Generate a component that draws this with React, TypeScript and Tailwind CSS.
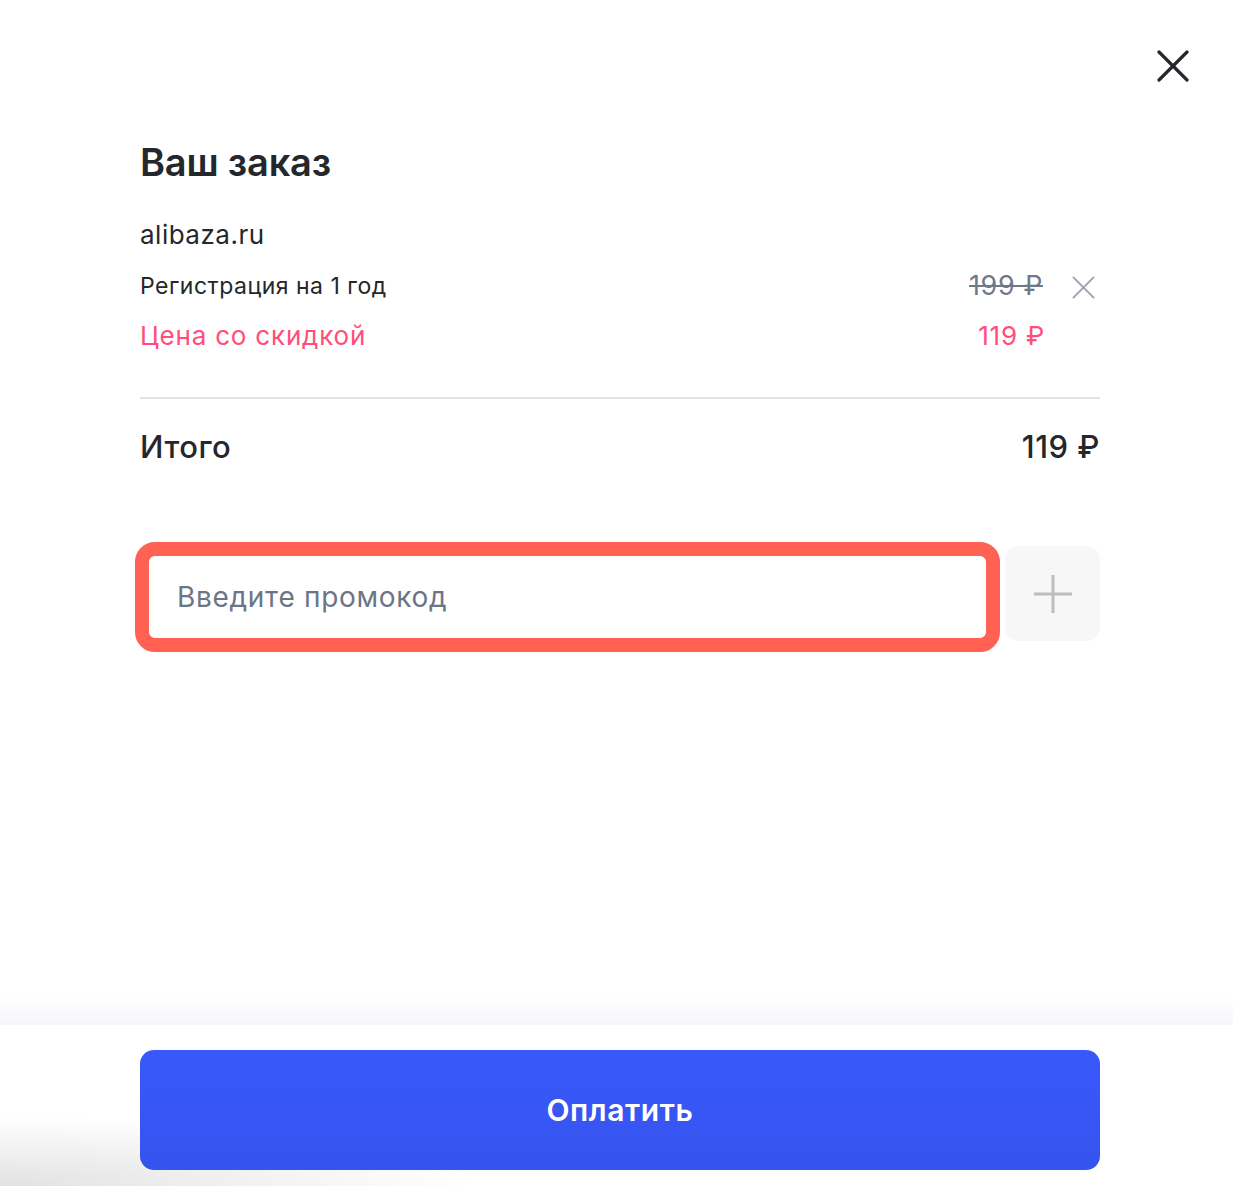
const font = { fontFamily: "Inter, 'Noto Sans', sans-serif" };

function Cross({ className, stroke }: { className: string; stroke: number }) {
    return (
        <svg viewBox="0 0 32 32" className={className} fill="none" stroke="currentColor" strokeWidth={stroke} strokeLinecap="round">
            <path d="M2 2 30 30" />
            <path d="M30 2 2 30" />
        </svg>
    );
}

export default function App() {
    return (
        <div className="relative flex h-[1186px] w-full flex-col overflow-hidden bg-white text-[#24272c]" style={font}>
            {/* close button */}
            <button className="absolute left-[1155px] top-[48px] flex h-[36px] w-[36px] items-center justify-center text-[#24272c]">
                <Cross className="h-[32px] w-[32px]" stroke={3.2} />
            </button>

            <div className="flex-1 px-[140px] pt-[138px]">
                <div className="w-[960px]">
                    <h1 className="text-[38px] font-semibold leading-[48px] tracking-[-0.2px]">Ваш заказ</h1>

                    <div className="mt-[31px] text-[26px] leading-[36px] tracking-[0.5px]">alibaza.ru</div>

                    {/* order line */}
                    <div className="mt-[18px] flex items-center justify-between">
                        <span className="text-[23px] leading-[30px] tracking-[0.5px]">Регистрация на 1 год</span>
                        <div className="mr-[5px] flex items-center gap-[29px]">
                            <span className="text-[27px] leading-[30px] tracking-[0.6px] text-[#6e7889] line-through decoration-2">199 ₽</span>
                            <Cross className="mt-[3px] h-[23px] w-[23px] text-[#98a2b3]" stroke={2.6} />
                        </div>
                    </div>
                    <div className="mt-[18px] flex items-center justify-between pr-[55px] text-[26px] leading-[34px] tracking-[0.8px] text-[#ff4e7b]">
                        <span>Цена со скидкой</span>
                        <span>119 ₽</span>
                    </div>

                    <div className="mt-[44px] h-[2px] bg-[#e1e4ec]" />

                    <div className="mt-[28px] flex items-center justify-between text-[31px] font-medium leading-[40px] tracking-[0.5px]">
                        <span>Итого</span>
                        <span>119 ₽</span>
                    </div>

                    {/* promo code */}
                    <div className="mt-[79px] flex gap-[5px]">
                        <div className="-my-[4px] -ml-[5px] h-[110px] flex-1 rounded-[20px] border-[14px] border-[#ff6152] bg-white">
                            <input
                                placeholder="Введите промокод"
                                className="h-full w-full rounded-[8px] bg-white px-[28px] text-[28px] tracking-[0.7px] text-[#24272c] outline-none placeholder:text-[#6c7585]"
                                style={font}
                            />
                        </div>
                        <button className="flex h-[95px] w-[95px] items-center justify-center rounded-[14px] bg-[#f7f7f7] text-[#bdbdbd]">
                            <svg viewBox="0 0 38 38" className="h-[38px] w-[38px]" fill="none" stroke="currentColor" strokeWidth={3}>
                                <path d="M19 0v38M0 19h38" />
                            </svg>
                        </button>
                    </div>
                </div>
            </div>

            {/* pay footer */}
            <div className="h-[28px] bg-gradient-to-b from-white to-[#f5f6f9]" />
            <div className="relative bg-white px-[140px] pb-[16px] pt-[25px]">
                <div className="absolute bottom-0 left-0 h-[70px] w-[480px] bg-[radial-gradient(ellipse_at_bottom_left,#e2e2e2,transparent_70%)]" />
                <button className="relative flex h-[120px] w-[960px] items-center justify-center rounded-[14px] bg-gradient-to-b from-[#3958fb] to-[#3554ee] text-[30px] font-semibold tracking-[0.6px] text-white">
                    Оплатить
                </button>
            </div>
        </div>
    );
}
